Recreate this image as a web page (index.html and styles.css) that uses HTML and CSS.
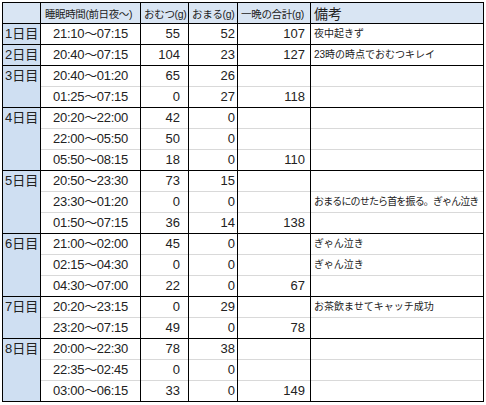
FILE: index.html
```html
<!DOCTYPE html>
<html lang="ja">
<head>
<meta charset="utf-8">
<link rel="stylesheet" href="styles.css">
</head>
<body>
<table class="sheet">
  <colgroup>
    <col class="c-day"><col class="c-time"><col class="c-omutsu"><col class="c-omaru"><col class="c-total"><col class="c-note">
  </colgroup>
  <thead>
    <tr class="head">
      <th class="corner"></th>
      <th class="h-time">睡眠時間(前日夜～)</th>
      <th>おむつ(g)</th>
      <th>おまる(g)</th>
      <th>一晩の合計(g)</th>
      <th class="h-note">備考</th>
    </tr>
  </thead>
  <tbody>
    <tr class="grp">
      <td class="day" rowspan="1">1日目</td>
      <td class="time">21:10～07:15</td><td class="num n1">55</td><td class="num n2">52</td><td class="num n3">107</td><td class="note">夜中起きず</td>
    </tr>
    <tr class="grp">
      <td class="day" rowspan="1">2日目</td>
      <td class="time">20:40～07:15</td><td class="num n1">104</td><td class="num n2">23</td><td class="num n3">127</td><td class="note">23時の時点でおむつキレイ</td>
    </tr>
    <tr class="grp">
      <td class="day" rowspan="2">3日目</td>
      <td class="time">20:40～01:20</td><td class="num n1">65</td><td class="num n2">26</td><td class="num n3"></td><td class="note"></td>
    </tr>
    <tr>
      <td class="time">01:25～07:15</td><td class="num n1">0</td><td class="num n2">27</td><td class="num n3">118</td><td class="note"></td>
    </tr>
    <tr class="grp">
      <td class="day" rowspan="3">4日目</td>
      <td class="time">20:20～22:00</td><td class="num n1">42</td><td class="num n2">0</td><td class="num n3"></td><td class="note"></td>
    </tr>
    <tr>
      <td class="time">22:00～05:50</td><td class="num n1">50</td><td class="num n2">0</td><td class="num n3"></td><td class="note"></td>
    </tr>
    <tr>
      <td class="time">05:50～08:15</td><td class="num n1">18</td><td class="num n2">0</td><td class="num n3">110</td><td class="note"></td>
    </tr>
    <tr class="grp">
      <td class="day" rowspan="3">5日目</td>
      <td class="time">20:50～23:30</td><td class="num n1">73</td><td class="num n2">15</td><td class="num n3"></td><td class="note"></td>
    </tr>
    <tr>
      <td class="time">23:30～01:20</td><td class="num n1">0</td><td class="num n2">0</td><td class="num n3"></td><td class="note note-long">おまるにのせたら首を振る。ぎゃん泣き</td>
    </tr>
    <tr>
      <td class="time">01:50～07:15</td><td class="num n1">36</td><td class="num n2">14</td><td class="num n3">138</td><td class="note"></td>
    </tr>
    <tr class="grp">
      <td class="day" rowspan="3">6日目</td>
      <td class="time">21:00～02:00</td><td class="num n1">45</td><td class="num n2">0</td><td class="num n3"></td><td class="note">ぎゃん泣き</td>
    </tr>
    <tr>
      <td class="time">02:15～04:30</td><td class="num n1">0</td><td class="num n2">0</td><td class="num n3"></td><td class="note">ぎゃん泣き</td>
    </tr>
    <tr>
      <td class="time">04:30～07:00</td><td class="num n1">22</td><td class="num n2">0</td><td class="num n3">67</td><td class="note"></td>
    </tr>
    <tr class="grp">
      <td class="day" rowspan="2">7日目</td>
      <td class="time">20:20～23:15</td><td class="num n1">0</td><td class="num n2">29</td><td class="num n3"></td><td class="note">お茶飲ませてキャッチ成功</td>
    </tr>
    <tr>
      <td class="time">23:20～07:15</td><td class="num n1">49</td><td class="num n2">0</td><td class="num n3">78</td><td class="note"></td>
    </tr>
    <tr class="grp">
      <td class="day" rowspan="3">8日目</td>
      <td class="time">20:00～22:30</td><td class="num n1">78</td><td class="num n2">38</td><td class="num n3"></td><td class="note"></td>
    </tr>
    <tr>
      <td class="time">22:35～02:45</td><td class="num n1">0</td><td class="num n2">0</td><td class="num n3"></td><td class="note"></td>
    </tr>
    <tr>
      <td class="time">03:00～06:15</td><td class="num n1">33</td><td class="num n2">0</td><td class="num n3">149</td><td class="note"></td>
    </tr>
  </tbody>
</table>
</body>
</html>
```
FILE: styles.css
```css
html, body {
  margin: 0;
  padding: 0;
  background: #ffffff;
}
body {
  font-family: "Liberation Sans", "Noto Sans CJK JP", sans-serif;
  color: #222222;
}
.sheet {
  margin: 2px 0 0 2px;
  border-collapse: collapse;
  table-layout: fixed;
  width: 481px;
  border: 1px solid #000000;
}
.c-day { width: 38px; }
.c-time { width: 100px; }
.c-omutsu { width: 48px; }
.c-omaru { width: 49px; }
.c-total { width: 73px; }
.c-note { width: 173px; }

.sheet th, .sheet td {
  padding: 0;
  border-left: 1px solid #000000;
  border-right: 1px solid #000000;
  border-top: 1px solid #d9d9d9;
  white-space: nowrap;
  overflow: hidden;
}
.head th {
  height: 19px;
  background: #d9e5f3;
  font-weight: normal;
  font-size: 10.5px;
  letter-spacing: -0.3px;
  text-align: left;
  padding-left: 3px;
  vertical-align: middle;
  border-top: 1px solid #000000;
}
.head .h-time { padding-left: 4px; letter-spacing: -0.4px; }
.head .h-note { font-size: 14px; letter-spacing: 0; padding-left: 3px; }
.sheet td {
  height: 20px;
  vertical-align: middle;
  line-height: 20px;
}
.grp td { border-top-color: #000000; }
.day {
  background: #cfdff2;
  font-size: 13px;
  text-align: left;
  vertical-align: top !important;
  padding-left: 2px !important;
}
.time {
  font-size: 13px;
  letter-spacing: -0.3px;
  text-align: center;
}
.num {
  font-size: 13px;
  text-align: right;
}
.n1 { padding-right: 8px !important; }
.n2 { padding-right: 2px !important; }
.n3 { padding-right: 5px !important; }
.note {
  font-size: 10px;
  padding-left: 3px !important;
  text-align: left;
}
.note-long { letter-spacing: -0.85px; }
```
